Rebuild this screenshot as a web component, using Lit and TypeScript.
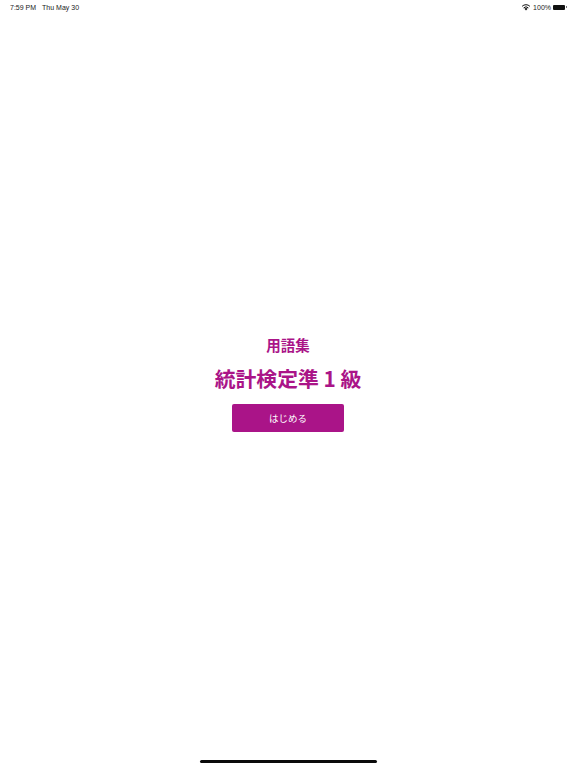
import { LitElement, html, css } from "lit";
import { customElement } from "lit/decorators.js";

@customElement("app-root")
export class AppRoot extends LitElement {
  static styles = css`
    :host {
      display: flex;
      flex-direction: column;
      width: 576px;
      height: 768px;
      background: #fff;
      font-family: "Liberation Sans", "Noto Sans CJK JP", sans-serif;
      overflow: hidden;
    }
    .status {
      height: 14px;
      flex: none;
      display: flex;
      align-items: center;
      justify-content: space-between;
      padding: 0 9px 0 10px;
      font-size: 7px;
      color: #222;
    }
    .left { display: flex; gap: 6px; }
    .right { display: flex; align-items: center; gap: 2px; }
    .battery {
      display: flex;
      align-items: center;
      gap: 1px;
    }
    .battery-body { width: 12px; height: 5px; background: #111; border-radius: 1px; }
    .battery-cap { width: 1px; height: 2px; background: #777; }
    .main {
      flex: 1;
      display: flex;
      flex-direction: column;
      align-items: center;
      padding-top: 321px;
      color: #aa1488;
      font-family: "Noto Sans CJK JP", sans-serif;
    }
    .sub { font-size: 14.5px; line-height: 20px; font-weight: 700; }
    .title {
      font-size: 20.8px;
      line-height: 30px;
      font-weight: 700;
      margin-top: 8px;
      white-space: pre;
    }
    .btn {
      margin-top: 11px;
      width: 112px;
      height: 28px;
      border-radius: 2px;
      background: #aa1488;
      color: #fff;
      font-size: 9.5px;
      display: flex;
      align-items: center;
      justify-content: center;
      border: none;
      font-family: inherit;
      padding: 0;
    }
    .home-wrap { flex: none; display: flex; justify-content: center; padding-bottom: 5px; }
    .home { width: 177px; height: 3px; border-radius: 2px; background: #0a0a0a; }
  `;

  render() {
    return html`
      <div class="status">
        <div class="left"><span>7:59 PM</span><span>Thu May 30</span></div>
        <div class="right">
          <svg width="10" height="8" viewBox="0 0 10 8" aria-hidden="true">
            <path d="M5 7.6 L3.4 5.8 A2.3 2.3 0 0 1 6.6 5.8 Z" fill="#111" />
            <path d="M2.6 4.9 A3.5 3.5 0 0 1 7.4 4.9" fill="none" stroke="#111" stroke-width="1" />
            <path d="M1.1 3.3 A5.6 5.6 0 0 1 8.9 3.3" fill="none" stroke="#111" stroke-width="1" />
          </svg>
          <span>100%</span>
          <div class="battery"><div class="battery-body"></div><div class="battery-cap"></div></div>
        </div>
      </div>
      <div class="main">
        <div class="sub">用語集</div>
        <div class="title">統計検定準 1 級</div>
        <button class="btn">はじめる</button>
      </div>
      <div class="home-wrap"><div class="home"></div></div>
    `;
  }
}
